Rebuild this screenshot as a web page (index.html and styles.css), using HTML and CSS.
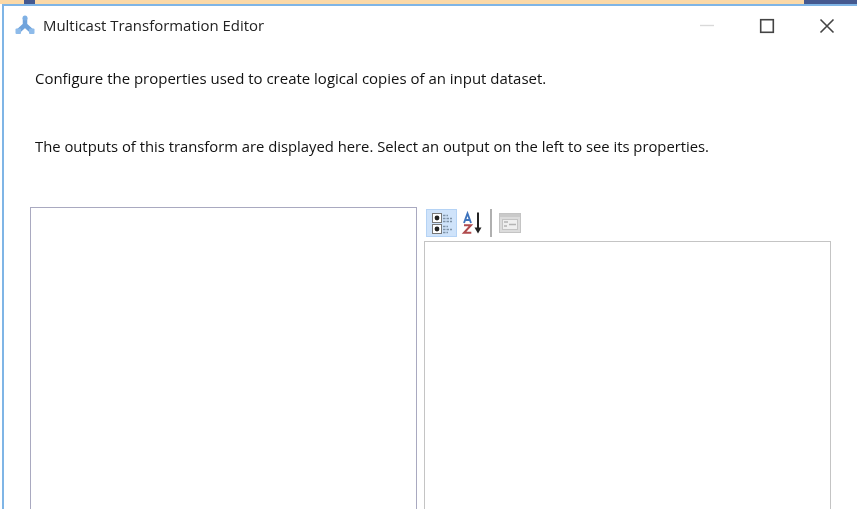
FILE: index.html
```html
<!DOCTYPE html>
<html lang="en">
<head>
<meta charset="utf-8">
<title>Multicast Transformation Editor</title>
<link rel="stylesheet" href="styles.css">
</head>
<body>
<div class="topstrip">
  <div class="seg seg-a"></div>
  <div class="seg seg-b"></div>
  <div class="seg seg-c"></div>
  <div class="seg seg-d"></div>
</div>
<div class="window">
  <header class="titlebar">
    <svg class="appicon" width="20" height="20" viewBox="0 0 20 20">
      <path d="M10 3V10L3.500 16M10 10L16.500 16" fill="none" stroke="#6fa3dc" stroke-width="4.500"/>
      <circle cx="10" cy="3" r="2.500" fill="#7fb0e4"/>
      <rect x="0.500" y="13.500" width="5.500" height="5.500" rx="1" fill="#8ebbea"/>
      <rect x="14" y="13.500" width="5.500" height="5.500" rx="1" fill="#8ebbea"/>
    </svg>
    <span class="title">Multicast Transformation Editor</span>
    <div class="controls">
      <svg class="ctl" width="16" height="16" viewBox="0 0 16 16"><path d="M1 7.500H15" stroke="#d9d9d9" stroke-width="1.400"/></svg>
      <svg class="ctl" width="16" height="16" viewBox="0 0 16 16"><rect x="1.700" y="1.700" width="12.600" height="12.600" fill="none" stroke="#444" stroke-width="1.600"/></svg>
      <svg class="ctl" width="16" height="16" viewBox="0 0 16 16"><path d="M1.500 1.500L14.500 14.500M14.500 1.500L1.500 14.500" stroke="#444" stroke-width="1.600"/></svg>
    </div>
  </header>
  <p class="line line-one">Configure the properties used to create logical copies of an input dataset.</p>
  <p class="line line-two">The outputs of this transform are displayed here. Select an output on the left to see its properties.</p>
  <div class="panes">
    <div class="listbox"></div>
    <div class="propside">
      <div class="toolbar">
        <div class="tool tool-on">
          <svg width="26" height="26" viewBox="0 0 26 26">
            <rect x="3.500" y="3.500" width="9" height="9" fill="#fff" stroke="#777"/><circle cx="8" cy="8" r="2.400" fill="#222"/>
            <rect x="3.500" y="14.500" width="9" height="9" fill="#fff" stroke="#777"/><circle cx="8" cy="19" r="2.400" fill="#222"/>
            <path d="M14 5.500h5M14 8.500h9M14 11.500h9M14 16.500h5M14 19.500h9M14 22.500h5" stroke="#7f93a8" stroke-width="1.500" stroke-dasharray="2.500 1"/>
          </svg>
        </div>
        <div class="tool">
          <svg width="24" height="24" viewBox="0 0 24 24">
            <path d="M3 12L6.500 2.500L10 12M4.200 9H8.800" fill="none" stroke="#3f74bd" stroke-width="1.900"/>
            <path d="M3 14.200H10L3 21.800H10.300" fill="none" stroke="#b04a4c" stroke-width="2"/>
            <path d="M17 1.500V19" stroke="#222" stroke-width="2"/><path d="M13.500 16.500H20.500L17 22.500Z" fill="#222"/>
          </svg>
        </div>
        <div class="divider"></div>
        <div class="tool">
          <svg width="24" height="24" viewBox="0 0 24 24">
            <rect x="1.500" y="2.500" width="21" height="19" fill="#dcdcdc" stroke="#c4c4c4"/>
            <rect x="2" y="3" width="20" height="3" fill="#cacaca"/>
            <rect x="4.500" y="8.500" width="15" height="10" fill="#efefef" stroke="#c4c4c4"/>
            <path d="M6 11h4M6 15h3M11 13.500h7" stroke="#b4b4b4" stroke-width="1.300"/>
          </svg>
        </div>
      </div>
      <div class="propgrid"></div>
    </div>
  </div>
</div>
</body>
</html>
```
FILE: styles.css
```css
html, body { margin: 0; padding: 0; }
body {
  width: 857px;
  height: 509px;
  overflow: hidden;
  background: #fff;
  font-family: "Open Sans", "Noto Sans", sans-serif;
  color: #111;
}
.topstrip { display: flex; height: 4px; }
.seg-a { width: 24px; background: #fbd9a8; }
.seg-b { width: 11px; background: #45598f; }
.seg-c { flex: 1; background: #fbd9a8; }
.seg-d { width: 53px; background: #45598f; }
.window {
  height: 505px;
  margin-left: 2px;
  box-sizing: border-box;
  border-top: 2px solid #7fb5e6;
  border-left: 2px solid #7fb5e6;
  overflow: hidden;
  filter: blur(0.4px);
}
.titlebar { display: flex; align-items: center; height: 38px; padding-left: 11px; }
.appicon { margin-right: 8px; }
.title { font-size: 14.950px; color: #222; }
.controls { display: flex; margin-left: auto; gap: 44px; padding: 1px 22px 0 0; }
.line { margin: 0; padding-left: 31px; font-size: 14.800px; line-height: 20px; }
.line-one { margin-top: 24px; font-size: 14.970px; }
.line-two { margin-top: 48px; }
.panes { display: flex; margin-top: 51px; padding-left: 26px; }
.listbox {
  width: 387px;
  height: 320px;
  box-sizing: border-box;
  border: 1.500px solid #a9a9c0;
  flex: none;
}
.propside { margin-left: 7px; width: 407px; flex: none; }
.toolbar { display: flex; align-items: center; height: 34px; padding: 0 0 2px 2px; box-sizing: border-box; }
.tool { width: 31px; height: 28px; display: flex; align-items: center; justify-content: center; }
.tool-on { background: #cfe3fa; border: 1px solid #b5d3f5; box-sizing: border-box; }
.divider { width: 1.500px; height: 28px; background: #b0b0b0; margin: 0 3px 0 2px; }
.propgrid { height: 300px; border: 1.500px solid #c4c4c4; box-sizing: border-box; }
```
